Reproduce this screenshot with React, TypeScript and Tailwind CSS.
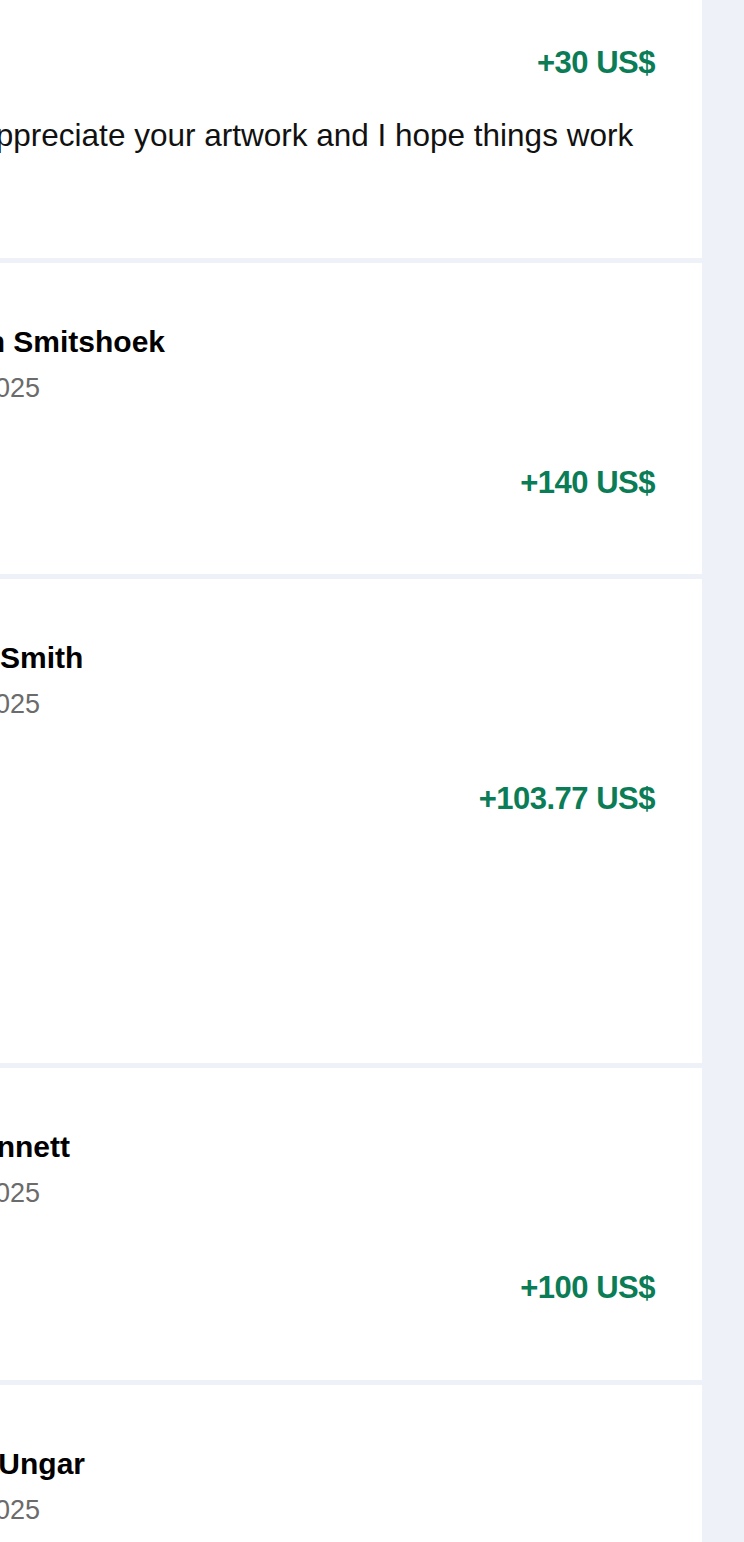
import React from "react";

type Donation = {
  name: string;
  date: string;
  amount: string;
  height: string;
};

const donations: Donation[] = [
  { name: "Robin Smitshoek", date: "3/12/2025", amount: "+140 US$", height: "h-[311px]" },
  { name: "John Smith", date: "3/10/2025", amount: "+103.77 US$", height: "h-[484px]" },
  { name: "Al Bennett", date: "3/08/2025", amount: "+100 US$", height: "h-[312px]" },
  { name: "Mark Ungar", date: "3/05/2025", amount: "+50 US$", height: "h-[312px]" },
];

function DonationCard({ d }: { d: Donation }) {
  return (
    <div className={`bg-white overflow-hidden shrink-0 ${d.height}`}>
      <div className="-ml-[80px] pr-[47px] pt-[59px] flex flex-col">
        <div className="text-[30px] leading-[40px] font-bold text-black whitespace-nowrap">
          {d.name}
        </div>
        <div className="mt-[8px] text-[27px] leading-[36px] text-[#6b6b6b] whitespace-nowrap">
          {d.date}
        </div>
        <div className="mt-[57px] flex justify-end">
          <span className="text-[31px] leading-[40px] font-bold text-[#0a7c56] tracking-[-0.5px]">
            {d.amount}
          </span>
        </div>
      </div>
    </div>
  );
}

export default function App() {
  return (
    <div
      className="w-[744px] h-[1542px] overflow-hidden bg-[#eef1f8] flex"
      style={{ fontFamily: '"Liberation Sans", Arial, sans-serif' }}
    >
      <div className="w-[702px] flex flex-col gap-[5px]">
        <div className="bg-white overflow-hidden shrink-0 h-[258px]">
          <div className="-ml-[83px] pr-[47px] pt-[43px] flex flex-col">
            <div className="flex justify-end">
              <span className="text-[31px] leading-[40px] font-bold text-[#0a7c56] tracking-[-0.5px]">
                +30 US$
              </span>
            </div>
            <p className="mt-[32px] text-[31.5px] leading-[40px] text-[#111111]">
              I do appreciate your artwork and I hope things work out!
            </p>
          </div>
        </div>
        {donations.map((d) => (
          <DonationCard key={d.name} d={d} />
        ))}
      </div>
      <div className="flex-1" />
    </div>
  );
}
